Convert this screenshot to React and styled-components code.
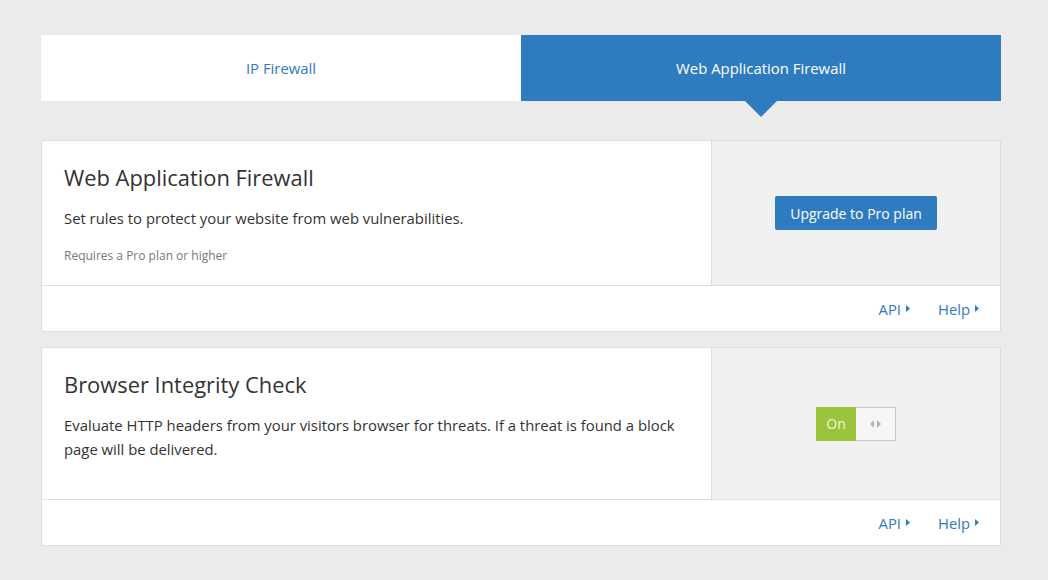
import React from 'react';
import styled, { createGlobalStyle } from 'styled-components';

const BLUE = '#2f7bbf';
const BORDER = '#dedede';

const GlobalStyle = createGlobalStyle`
  html, body {
    margin: 0;
    background: #ebebeb;
    font-family: "Open Sans", "DejaVu Sans", sans-serif;
    color: #333;
  }
`;

const Page = styled.div`
  width: 960px;
  padding: 35px 0 0 41px;
`;

const Tabs = styled.div`
  display: grid;
  grid-template-columns: 1fr 1fr;
  height: 66px;
  margin-bottom: 39px;
`;

const Tab = styled.div`
  position: relative;
  display: flex;
  align-items: center;
  justify-content: center;
  font-size: 14.9px;
  background: ${(props) => (props.active ? BLUE : '#fff')};
  color: ${(props) => (props.active ? '#fff' : BLUE)};

  &::after {
    content: '';
    display: ${(props) => (props.active ? 'block' : 'none')};
    position: absolute;
    left: 50%;
    top: 100%;
    margin-left: -16px;
    border-left: 16px solid transparent;
    border-right: 16px solid transparent;
    border-top: 16px solid ${BLUE};
  }
`;

const Card = styled.div`
  background: #fff;
  border: 1px solid ${BORDER};
  margin-bottom: 15px;
`;

const CardBody = styled.div`
  display: grid;
  grid-template-columns: 670px 1fr;
  min-height: ${(props) => props.minHeight}px;
`;

const Info = styled.div`
  padding: 23px 22px 18px;
  border-right: 1px solid ${BORDER};
`;

const Control = styled.div`
  background: #f0f0f0;
  display: flex;
  align-items: center;
  justify-content: center;
`;

const Title = styled.h2`
  margin: 0 0 14px;
  font-size: 21.9px;
  font-weight: 400;
  line-height: 28px;
  color: #333;
`;

const Description = styled.p`
  margin: 0;
  font-size: 14.85px;
  line-height: 24px;
  color: #333;
`;

const Note = styled.p`
  margin: 17px 0 0;
  font-size: 12px;
  line-height: 18px;
  color: #777;
`;

const Button = styled.button`
  font-family: inherit;
  font-size: 14px;
  color: #fff;
  background: ${BLUE};
  border: none;
  border-radius: 2px;
  height: 34px;
  padding: 0 15px;
`;

const Toggle = styled.div`
  display: flex;
  height: 34px;
  width: 80px;
  border: 1px solid #c8c8c8;
  box-sizing: border-box;
`;

const ToggleOn = styled.div`
  flex: 0 0 40px;
  margin: -1px 0 -1px -1px;
  background: #9bc43d;
  color: #eef7d9;
  font-size: 14px;
  display: flex;
  align-items: center;
  justify-content: center;
`;

const ToggleHandle = styled.div`
  flex: 1;
  background: #f6f6f6;
  display: flex;
  align-items: center;
  justify-content: center;
`;

const Footer = styled.div`
  border-top: 1px solid ${BORDER};
  height: 45px;
  display: flex;
  align-items: center;
  justify-content: flex-end;
  gap: 28px;
  padding-right: 21px;
`;

const FooterLink = styled.a`
  color: ${BLUE};
  font-size: 14.8px;
  text-decoration: none;
  display: flex;
  align-items: center;
  gap: 5px;
`;

const Caret = () => (
  <svg width="4" height="7" viewBox="0 0 4 7">
    <path d="M0 0 L4 3.5 L0 7 Z" fill={BLUE} />
  </svg>
);

const Arrows = () => (
  <svg width="11" height="8" viewBox="0 0 11 8">
    <path d="M4 0 L0 4 L4 8 Z" fill="#b5b5b5" />
    <path d="M7 0 L11 4 L7 8 Z" fill="#b5b5b5" />
  </svg>
);

const CardFooter = () => (
  <Footer>
    <FooterLink href="#">API <Caret /></FooterLink>
    <FooterLink href="#">Help <Caret /></FooterLink>
  </Footer>
);

export default function App() {
  return (
    <>
      <GlobalStyle />
      <Page>
        <Tabs>
          <Tab>IP Firewall</Tab>
          <Tab active>Web Application Firewall</Tab>
        </Tabs>

        <Card>
          <CardBody minHeight={144}>
            <Info>
              <Title>Web Application Firewall</Title>
              <Description>Set rules to protect your website from web vulnerabilities.</Description>
              <Note>Requires a Pro plan or higher</Note>
            </Info>
            <Control>
              <Button>Upgrade to Pro plan</Button>
            </Control>
          </CardBody>
          <CardFooter />
        </Card>

        <Card>
          <CardBody minHeight={151}>
            <Info>
              <Title>Browser Integrity Check</Title>
              <Description>
                Evaluate HTTP headers from your visitors browser for threats. If a threat is found a block page will be delivered.
              </Description>
            </Info>
            <Control>
              <Toggle>
                <ToggleOn>On</ToggleOn>
                <ToggleHandle><Arrows /></ToggleHandle>
              </Toggle>
            </Control>
          </CardBody>
          <CardFooter />
        </Card>
      </Page>
    </>
  );
}
